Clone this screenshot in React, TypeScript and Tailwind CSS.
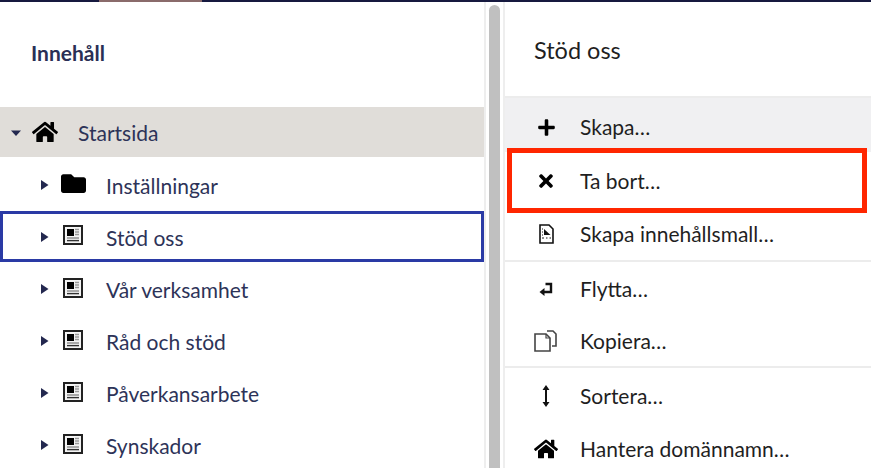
import { FaHome, FaPlus, FaTimes, FaFolder } from 'react-icons/fa';
import type { ReactNode } from 'react';

const font = "font-['Lato',sans-serif]";

const Arrow = ({ open }: { open?: boolean }) => (
  <svg width="10" height="10" viewBox="0 0 10 10" className={`shrink-0 ${open ? '' : 'mb-[2px]'}`}>
    {open ? <path d="M0 2.5h10L5 8z" fill="#23284f" /> : <path d="M1 0v10l7.5-5z" fill="#23284f" />}
  </svg>
);

const PageIcon = () => (
  <svg width="20" height="20" viewBox="0 0 20 20" className="shrink-0">
    <rect x="1" y="1" width="18" height="18" fill="#f4f4f4" stroke="#222" strokeWidth="2" />
    <rect x="4" y="4" width="7" height="7" fill="#000" />
    <path d="M12 4.5h4M12 7h4M12 9.5h4" stroke="#999" strokeWidth="1.4" />
    <path d="M4 13h12" stroke="#888" strokeWidth="1.4" />
    <path d="M4 15.6h12" stroke="#333" strokeWidth="1.4" />
  </svg>
);

const TreeRow = ({
  label,
  icon,
  className = 'h-[52px] pt-[4px] pl-[40px]',
}: {
  label: string;
  icon: ReactNode;
  className?: string;
}) => (
  <div className={`flex items-center ${className}`}>
    <Arrow />
    <span className="w-[20px] h-[20px] ml-[13px] mb-[5px] flex items-center justify-center">{icon}</span>
    <span className="ml-[23px] text-[21px] text-[#2d3358]">{label}</span>
  </div>
);

const TemplateIcon = () => (
  <svg width="15" height="20" viewBox="0 0 15 20">
    <path d="M1 1h9l4 4v14H1z" fill="#fff" stroke="#111" strokeWidth="1.6" />
    <path d="M5 5l6.5 6H5z" fill="#111" />
    <path d="M3 5h1M3 8h1M3 11h1M3 14h2M7 14h1.5M10.5 14H12" stroke="#666" strokeWidth="1.3" />
  </svg>
);

const MoveIcon = () => (
  <svg width="14" height="14" viewBox="0 0 14 14">
    <path d="M6.5 2h5.5v8H5" fill="none" stroke="#111" strokeWidth="2.4" />
    <path d="M0.5 10L5.5 6v8z" fill="#111" />
  </svg>
);

const CopyIcon = () => (
  <svg width="24" height="22" viewBox="0 0 24 22">
    <path d="M1 4h11l4 4v13H1z" fill="#fff" stroke="#444" strokeWidth="1.6" />
    <path d="M12 4v4h4" fill="none" stroke="#444" strokeWidth="1.2" />
    <path d="M13 1h6l3 3v12h-4" fill="none" stroke="#444" strokeWidth="1.6" />
  </svg>
);

const SortIcon = () => (
  <svg width="8" height="22" viewBox="0 0 8 22">
    <path d="M4 3v16" stroke="#111" strokeWidth="2" />
    <path d="M0.5 5L4 0l3.5 5zM0.5 17L4 22l3.5-5z" fill="#111" />
  </svg>
);

const MenuRow = ({
  label,
  icon,
  className = '',
}: {
  label: string;
  icon: ReactNode;
  className?: string;
}) => (
  <div className={`flex items-center text-[21px] text-[#1f1f1f] ${className}`}>
    <span className="w-[24px] ml-[29px] flex justify-center">{icon}</span>
    <span className="ml-[22px]">{label}</span>
  </div>
);

export default function App() {
  return (
    <div className={`w-[871px] h-[468px] overflow-hidden bg-white flex flex-col relative ${font}`}>
      <div className="h-[2px] shrink-0 bg-[#16193f] flex">
        <div className="ml-[99px] w-[103px] bg-[#8a6b6b]" />
      </div>
      <div className="flex flex-1 min-h-0">
        <div className="w-[484px] shrink-0">
          <div className="h-[105px] pl-[31px] pt-[38px] text-[21px] leading-[26px] font-bold text-[#2a2f55]">
            Innehåll
          </div>
          <div className="h-[50px] pt-[2px] bg-[#e0ddd9] flex items-center pl-[11px]">
            <Arrow open />
            <span className="ml-[11px] mb-[2px] flex"><FaHome size={26} color="#000" /></span>
            <span className="ml-[20px] text-[21px] text-[#2d3358]">Startsida</span>
          </div>
          <TreeRow
            label="Inställningar"
            icon={<FaFolder size={25} color="#000" className="shrink-0" />}
            className="h-[54px] pt-[4px] pl-[40px]"
          />
          <TreeRow label="Stöd oss" icon={<PageIcon />} className="h-[51px] pt-[2px] pl-[37px] border-[3px] border-[#2a3aa5]" />
          <TreeRow label="Vår verksamhet" icon={<PageIcon />} />
          <TreeRow label="Råd och stöd" icon={<PageIcon />} />
          <TreeRow label="Påverkansarbete" icon={<PageIcon />} />
          <TreeRow label="Synskador" icon={<PageIcon />} />
        </div>
        <div className="w-[21px] shrink-0 flex justify-center border-l-2 border-r-2 border-[#eeeeee]">
          <div className="w-[11px] mt-[3px] bg-[#c0c0c0] rounded-t-[6px]" />
        </div>
        <div className="flex-1 min-w-0">
          <div className="h-[96px] pl-[29px] pt-[34px] text-[23.5px] leading-[28px] text-[#1f1f1f] border-b-2 border-[#ececec]">
            Stöd oss
          </div>
          <MenuRow label="Skapa…" icon={<FaPlus size={19} color="#000" />} className="h-[54px] pt-[4px] bg-[#f0f0f2]" />
          <MenuRow label="Ta bort…" icon={<FaTimes size={20} color="#000" />} className="h-[58px]" />
          <MenuRow label="Skapa innehållsmall…" icon={<TemplateIcon />} className="h-[52px] pb-[2px] border-b-2 border-[#ececec]" />
          <MenuRow label="Flytta…" icon={<MoveIcon />} className="h-[54px]" />
          <MenuRow label="Kopiera…" icon={<CopyIcon />} className="h-[52px] border-b-2 border-[#ececec]" />
          <MenuRow label="Sortera…" icon={<SortIcon />} className="h-[54px] pt-[2px]" />
          <MenuRow label="Hantera domännamn…" icon={<FaHome size={24} color="#000" />} className="h-[54px]" />
        </div>
      </div>
      <div className="absolute left-[507px] top-[148px] w-[360px] h-[65px] border-[5px] border-[#ff2600]" />
    </div>
  );
}
